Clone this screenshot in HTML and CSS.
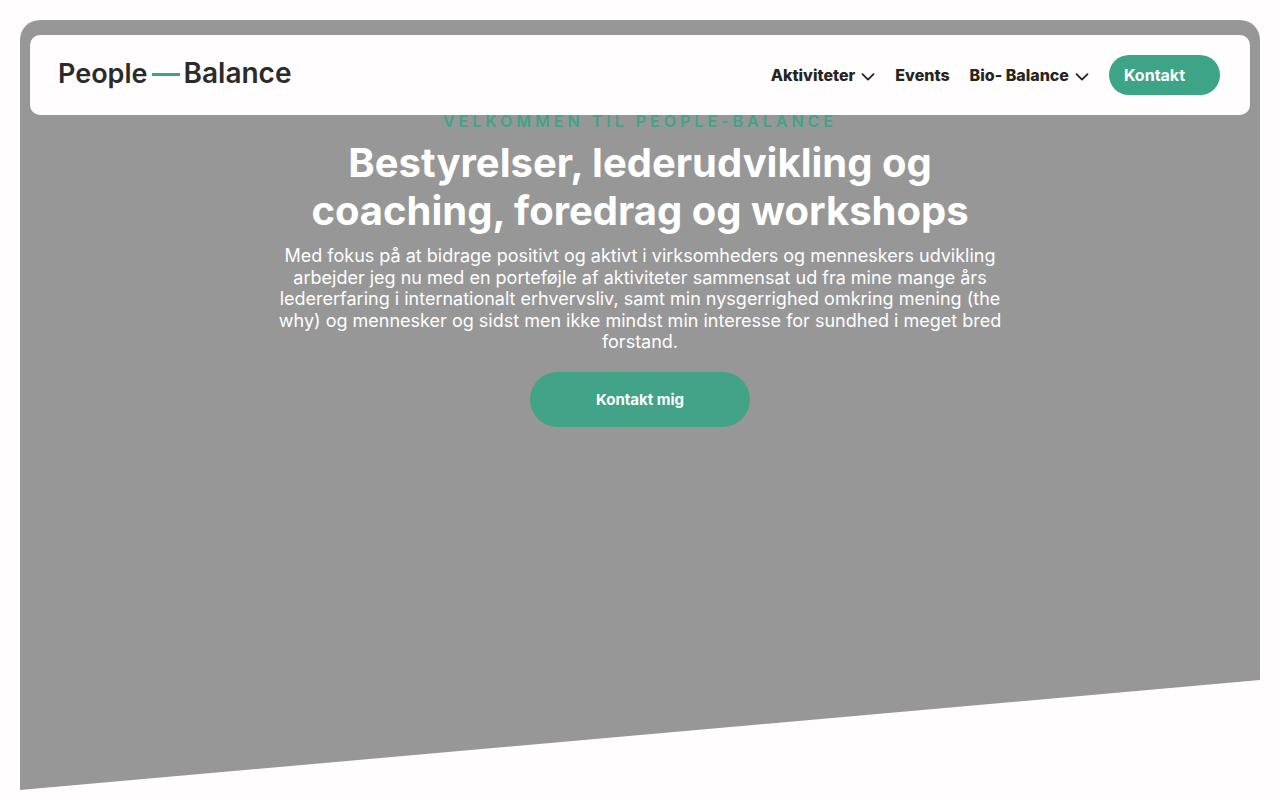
FILE: index.html
```html
<!DOCTYPE html>
<html lang="da">
<head>
<meta charset="utf-8">
<meta name="viewport" content="width=device-width, initial-scale=1">
<title>People-Balance</title>
<link rel="stylesheet" href="styles.css">
</head>
<body>
<header class="header">
  <a class="logo" href="#">
    <span class="logo-start">People</span>
    <span class="logo-dash"></span>
    <span class="logo-end">Balance</span>
  </a>
  <nav class="nav">
    <a class="nav-link" href="#">Aktiviteter
      <svg class="chevron" viewBox="0 0 14 8" aria-hidden="true"><path d="M1.5 1.200 7 6.600l5.500-5.400"/></svg>
    </a>
    <a class="nav-link" href="#">Events</a>
    <a class="nav-link" href="#">Bio- Balance
      <svg class="chevron" viewBox="0 0 14 8" aria-hidden="true"><path d="M1.5 1.200 7 6.600l5.500-5.400"/></svg>
    </a>
    <a class="nav-button" href="#">Kontakt</a>
  </nav>
</header>
<main class="hero">
  <div class="hero-content">
    <p class="eyebrow">VELKOMMEN TIL PEOPLE-BALANCE</p>
    <h1 class="title">Bestyrelser, lederudvikling og coaching, foredrag og workshops</h1>
    <p class="intro">Med fokus på at bidrage positivt og aktivt i virksomheders og menneskers udvikling arbejder jeg nu med en porteføjle af aktiviteter sammensat ud fra mine mange års ledererfaring i internationalt erhvervsliv, samt min nysgerrighed omkring mening (the why) og mennesker og sidst men ikke mindst min interesse for sundhed i meget bred forstand.</p>
    <a class="hero-button" href="#">Kontakt mig</a>
  </div>
</main>
</body>
</html>
```
FILE: styles.css
```css
* {
  box-sizing: border-box;
}

body {
  margin: 0;
  padding: 20px 20px 10px;
  background: #fffdfe;
  color: #25251f;
  font-family: Inter, "Liberation Sans", sans-serif;
}

a {
  color: inherit;
  text-decoration: none;
}

.header {
  position: fixed;
  z-index: 2;
  top: 35px;
  left: 30px;
  right: 30px;
  display: flex;
  align-items: center;
  justify-content: space-between;
  padding: 20px 30px 20px 28px;
  border-radius: 10px;
  background: #fffdfe;
}

.logo {
  display: flex;
  align-items: center;
  gap: 4px;
  padding-bottom: 2px;
  color: #2b2b2d;
  font-size: 28px;
  font-weight: 600;
  line-height: 34px;
}

.logo-start {
  font-size: 27px;
}

.logo-dash {
  width: 28px;
  height: 3px;
  background: #3ea486;
}

.logo-end {
  padding-bottom: 2px;
}

.nav {
  display: flex;
  align-items: center;
  gap: 20px;
  font-size: 16px;
  font-weight: 800;
}

.nav-link {
  display: flex;
  align-items: center;
  gap: 6px;
}

.chevron {
  width: 14px;
  height: 8px;
  margin-top: 3px;
  fill: none;
  stroke: currentColor;
  stroke-width: 1.8;
  stroke-linecap: round;
  stroke-linejoin: round;
}

.nav-button {
  padding: 0 35px 0 15px;
  border-radius: 20px;
  background: #3ea486;
  color: #fff;
  font-weight: 700;
  line-height: 40px;
}

.hero {
  min-height: calc(100vh - 30px);
  padding: 90px 20px 150px;
  border-radius: 20px 20px 0 0;
  background: #979797;
  clip-path: polygon(0 0, 100% 0, 100% calc(100% - 110px), 0 100%);
}

.hero-content {
  display: flex;
  flex-direction: column;
  align-items: center;
  max-width: 750px;
  margin: 0 auto;
  color: #fff;
  text-align: center;
}

.eyebrow {
  margin: 0 0 6px;
  color: #42a388;
  font-size: 16px;
  font-weight: 600;
  line-height: 23px;
  letter-spacing: 4px;
}

.title {
  margin: 0 0 10px;
  font-size: 40px;
  font-weight: 700;
  line-height: 48px;
}

.intro {
  margin: 0 0 19px;
  font-size: 18px;
  line-height: 1.2;
}

.hero-button {
  width: 220px;
  max-width: 100%;
  border-radius: 28px;
  background: #42a388;
  font-size: 15px;
  font-weight: 700;
  line-height: 55px;
}
```
